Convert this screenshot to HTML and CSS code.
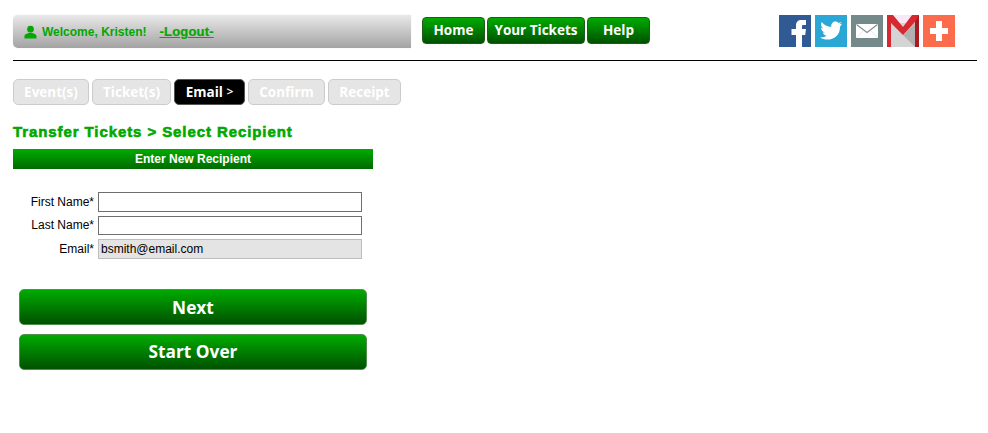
FILE: index.html
```html
<!DOCTYPE html>
<html lang="en">
<head>
<meta charset="utf-8">
<title>Transfer Tickets</title>
<link rel="stylesheet" href="styles.css">
</head>
<body>
<div class="page">
  <header class="header">
    <div class="welcome">
      <svg class="user-icon" viewBox="0 0 14 14" width="13" height="14"><circle cx="7" cy="4" r="3.6"/><path d="M0.5 14V11.500C0.5 9.500 3.500 9 5 8.200H9C10.500 9 13.500 9.500 13.500 11.500V14Z"/></svg>
      <span class="welcome-text">Welcome, Kristen!</span>
      <a class="logout" href="#">-Logout-</a>
    </div>
    <nav class="nav">
      <a class="nav-btn nav-home" href="#">Home</a>
      <a class="nav-btn nav-tickets" href="#">Your Tickets</a>
      <a class="nav-btn nav-help" href="#">Help</a>
    </nav>
    <div class="social">
      <svg class="soc" viewBox="0 0 32 32"><rect width="32" height="32" fill="#2f5a94"/><path d="M17 32V20H12.500V14H17V10.500C17 7 19 5 22.500 5H27V10H24.500C23.200 10 23 10.600 23 11.800V14H27L26.200 20H23V32Z" fill="#fff"/></svg>
      <svg class="soc" viewBox="0 0 32 32"><rect width="32" height="32" fill="#2ba7d6"/><path d="M27 8.500C26.200 8.900 25.300 9.100 24.400 9.200C25.300 8.600 26 7.800 26.300 6.800C25.400 7.300 24.500 7.700 23.500 7.900C21.800 6.100 18.900 6.200 17.300 8C16.200 9.200 16 10.700 16.300 12C12.400 11.800 9 10 6.700 7C5.500 9.200 6.100 11.900 8.100 13.200C7.400 13.200 6.700 13 6.100 12.700C6.100 14.900 7.600 16.800 9.700 17.300C9 17.500 8.300 17.500 7.700 17.400C8.300 19.200 10 20.500 11.900 20.600C9.900 22.100 7.500 22.800 5 22.500C12.900 27.500 25.500 23.500 25 11.500C25.800 10.900 26.500 9.800 27 8.500Z" fill="#fff"/></svg>
      <svg class="soc" viewBox="0 0 32 32"><rect width="32" height="32" fill="#74898a"/><rect x="5" y="9" width="22" height="14" fill="#fff"/><path d="M5.500 9.500L16 17.500L26.500 9.500" fill="none" stroke="#7f8f90" stroke-width="1.200"/><path d="M5.500 23L12 15.500M26.500 23L20 15.500" fill="none" stroke="#dfe4e4" stroke-width="0.800"/></svg>
      <svg class="soc" viewBox="0 0 32 32"><rect width="32" height="32" fill="#f7e8f7"/><path d="M4 8H28V32H4Z" fill="#d4d4d4"/><path d="M28 8L16 20L28 32Z" fill="#b0b0b0"/><path d="M0 0H6L16 12L25 0H32V7H28L16 20L4 8V32H0Z" fill="#d7282f"/><path d="M28 7L32 0V32H28Z" fill="#a81a1f"/></svg>
      <svg class="soc" viewBox="0 0 32 32"><rect width="32" height="32" fill="#fd6b4d"/><path d="M13 6H19V13H25V19H19V26H13V19H7V13H13Z" fill="#fff"/></svg>
    </div>
  </header>

  <ol class="steps">
    <li class="step step-1">Event(s)</li>
    <li class="step step-2">Ticket(s)</li>
    <li class="step step-3 current">Email <span class="step-arrow">&gt;</span></li>
    <li class="step step-4">Confirm</li>
    <li class="step step-5">Receipt</li>
  </ol>

  <h1 class="title">Transfer Tickets &gt; Select Recipient</h1>

  <section class="panel">
    <h2 class="panel-head">Enter New Recipient</h2>
    <form class="form">
      <label class="lbl" for="fn">First Name*</label>
      <input class="field" id="fn" type="text">
      <label class="lbl lbl-last" for="ln">Last Name*</label>
      <input class="field field-short" id="ln" type="text">
      <label class="lbl" for="em">Email*</label>
      <input class="field readonly" id="em" type="text" value="bsmith@email.com" readonly>
    </form>
    <div class="actions">
      <a class="action action-next" href="#">Next</a>
      <a class="action" href="#">Start Over</a>
    </div>
  </section>
</div>
</body>
</html>
```

FILE: styles.css
```css
* { box-sizing: border-box; }
html, body { margin: 0; background: #fff; }
body { font-family: "Liberation Sans", Arial, sans-serif; color: #000; height: 433px; overflow: hidden; }
.page { width: 964px; margin-left: 13px; }

.header { display: flex; align-items: flex-start; box-sizing: content-box; height: 45px; margin-top: 15px; border-bottom: 1px solid #000; }
.welcome { width: 398px; height: 33px; display: flex; align-items: center; padding-left: 11px; border-radius: 5px 0 0 5px; background: linear-gradient(#e9e9e9, #a3a3a3); box-shadow: 0 0 1px #ccc; }
.user-icon { fill: #00a800; flex: none; }
.welcome-text { margin-left: 5px; font-size: 12px; font-weight: 700; color: #00a800; }
.logout { margin-left: 13px; font-size: 13px; font-weight: 700; letter-spacing: 0.2px; color: #00a800; -webkit-text-stroke: 0.2px #00a800; }

.nav { display: flex; gap: 2px; margin-left: 11px; margin-top: 2px; }
.nav-btn { display: flex; align-items: center; justify-content: center; height: 27px; padding-bottom: 2px; border-radius: 4px; border: 1px solid #1d5c1d; background: linear-gradient(#00ab00, #005100); color: #fff; font: 700 13.5px "Open Sans", sans-serif; text-decoration: none; }
.nav-home { width: 63px; }
.nav-tickets { width: 98px; }
.nav-help { width: 63px; }

.social { display: flex; gap: 4px; margin-left: 129px; }
.soc { width: 32px; height: 32px; display: block; }

.steps { display: flex; gap: 3px; list-style: none; margin: 18px 0 0; padding: 0; }
.step { display: flex; align-items: center; justify-content: center; white-space: pre; height: 26px; padding-bottom: 1px; border-radius: 5px; border: 1px solid #ccc; background: #e5e5e5; color: #fff; font: 700 13.5px "Open Sans", sans-serif; }
.step-1 { width: 76px; }
.step-2 { width: 79px; }
.step-3 { width: 71px; }
.step-4 { width: 77px; }
.step-5 { width: 73px; }
.current { background: #000; border-color: #555; }
.step-arrow { font-weight: 600; font-size: 12px; }

.title { margin: 18px 0 0; height: 18px; line-height: 18px; font-size: 15px; font-weight: 700; color: #00a800; letter-spacing: 0.91px; -webkit-text-stroke: 0.6px #00a800; }

.panel { width: 360px; margin-top: 8px; }
.panel-head { margin: 0; height: 20px; line-height: 20px; text-align: center; font-size: 12px; font-weight: 700; color: #fff; background: linear-gradient(#00ab00, #006b00); }

.form { display: grid; grid-template-columns: 81px 264px; column-gap: 4px; row-gap: 4px; margin-top: 23px; align-items: center; }
.lbl { font-size: 12px; text-align: right; }
.lbl-last { padding-bottom: 2px; }
.field { width: 264px; height: 20px; padding: 0 2px; border: 1px solid #6f6f6f; background: #fff; font: 12px "Liberation Sans", sans-serif; color: #000; outline: none; border-radius: 0; }
.field-short { height: 19px; }
.readonly { background: #e4e4e4; border-color: #bdbdbd; }

.actions { display: flex; flex-direction: column; gap: 9px; margin: 30px 0 0 6px; }
.action { display: flex; align-items: center; justify-content: center; width: 348px; height: 36px; padding-bottom: 2px; border-radius: 5px; border: 1px solid #4f8f4f; background: linear-gradient(#00ab00, #005100); color: #fff; font: 700 17.3px "Open Sans", sans-serif; text-decoration: none; }
.action-next { padding-bottom: 0; }
```
